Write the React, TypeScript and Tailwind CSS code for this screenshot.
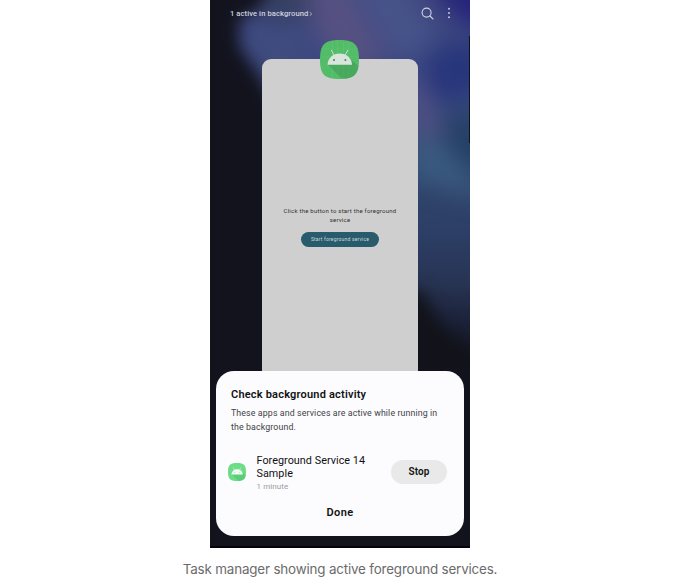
import React from "react";

function Wallpaper() {
  return (
    <svg className="absolute inset-0 h-full w-full" viewBox="0 0 260 548" preserveAspectRatio="none" aria-hidden="true">
      <defs>
        <filter id="soft" x="-100%" y="-100%" width="300%" height="300%" colorInterpolationFilters="sRGB">
          <feGaussianBlur stdDeviation="12" />
        </filter>
        <filter id="edge" x="-60%" y="-60%" width="220%" height="220%" colorInterpolationFilters="sRGB">
          <feGaussianBlur stdDeviation="8" />
        </filter>
        <linearGradient id="sky" gradientUnits="userSpaceOnUse" x1="0" y1="0" x2="0" y2="380">
          <stop offset="0" stopColor="#424a80" />
          <stop offset="0.2" stopColor="#374680" />
          <stop offset="0.4" stopColor="#334a72" />
          <stop offset="0.62" stopColor="#2c3e65" />
          <stop offset="0.75" stopColor="#273352" />
          <stop offset="0.86" stopColor="#1a2035" />
          <stop offset="0.97" stopColor="#12131d" />
        </linearGradient>
      </defs>
      <rect width="260" height="548" fill="url(#sky)" />
      <g filter="url(#soft)">
        <path d="M30 34 L85 28 L110 100 L50 100 Z" fill="#404c7e" />
        <path d="M45 -20 L92 -20 L105 14 L60 22 Z" fill="#353f60" />
        <path d="M92 -20 L130 -20 L180 60 L145 70 L112 45 Z" fill="#575182" />
        <path d="M140 -20 L185 -20 L225 40 L190 60 Z" fill="#47548a" />
        <path d="M210 -30 L290 -30 L290 38 L245 18 Z" fill="#26237a" />
        <path d="M208 75 L235 44 L285 45 L275 88 L225 102 Z" fill="#27357b" />
        <path d="M192 74 L212 72 L232 130 L206 145 Z" fill="#535285" />
        <path d="M200 138 L235 145 L280 200 L200 175 Z" fill="#3b5b80" />
        <path d="M235 118 L280 115 L280 175 L245 160 Z" fill="#243f66" />
      </g>
      <g filter="url(#edge)">
        <path d="M-30 -30 L62 -30 L53 6 L29 20 L29 46 L50 76 L70 110 L120 400 L-30 400 Z" fill="#12131d" />
        <path d="M190 289 L212 291 L232 326 L280 364 L280 410 L190 410 Z" fill="#12131a" />
      </g>
      <rect x="0" y="368" width="260" height="180" fill="#12131d" />
      <rect x="259" y="36" width="1" height="107" fill="#10131c" />
      <rect x="0" y="546" width="260" height="2" fill="#020308" />
    </svg>
  );
}

function AndroidIcon({ className, bg, head, eye, shade, grid }: { className: string; bg: string; head: string; eye: string; shade: string; grid: string }) {
  return (
    <svg className={className} viewBox="0 0 39 39" aria-hidden="true">
      <path d="M19.5 0 C34.5 0 39 4.5 39 19.5 C39 34.5 34.5 39 19.5 39 C4.5 39 0 34.5 0 19.5 C0 4.5 4.5 0 19.5 0 Z" fill={bg} />
      <path d="M12.5 1 V38 M17.5 1 V38 M23.5 1 V38 M28.5 2 V37 M2 9 H37 M1 17 H38 M1 27 H38" stroke={grid} strokeWidth="0.5" opacity="0.4" />
      <path d="M8 24.5 L32 24.5 L31.5 20 L38.3 26 C37.2 34 33.5 38 25 38.8 L20 37 Z" fill={shade} opacity="0.5" />
      <path d="M7.5 24.7 C8 18 13 13.5 19.7 13.5 C26.4 13.5 31.4 18 32 24.7 Z" fill={head} />
      <path d="M11.5 10.4 L14.3 15.5 M27.7 10.4 L25 15.5" stroke={head} strokeWidth="0.9" strokeLinecap="round" />
      <circle cx="14" cy="20" r="1" fill={eye} />
      <circle cx="25.4" cy="20" r="1" fill={eye} />
    </svg>
  );
}

function Header() {
  return (
    <header className="flex h-[27px] items-center pl-5 pr-[19px] text-[#d0d2de]">
      <span className="whitespace-nowrap font-['Roboto',sans-serif] text-[7.6px] font-medium leading-[10px] tracking-[0.08px]">1 active in background</span>
      <svg className="ml-[1px] h-1.5 w-1" viewBox="0 0 4 6" fill="none" stroke="currentColor" strokeWidth="0.7">
        <path d="M1 1.2 L2.6 3 L1 4.8" />
      </svg>
      <svg className="-mr-px -mt-px ml-auto h-[13px] w-[13px]" viewBox="0 0 13 13" fill="none" stroke="currentColor" strokeWidth="1.1" strokeLinecap="round">
        <circle cx="5.6" cy="5.6" r="4.5" />
        <path d="M9 9 L12 12" />
      </svg>
      <svg className="-mt-px ml-[14px] h-3 w-1" viewBox="0 0 4 12" fill="currentColor">
        <circle cx="2" cy="1.8" r="0.95" />
        <circle cx="2" cy="6" r="0.95" />
        <circle cx="2" cy="10.2" r="0.95" />
      </svg>
    </header>
  );
}

function AppPreview() {
  return (
    <section className="mx-auto mt-8 flex h-[312px] w-[156px] flex-col items-center rounded-t-[9px] bg-[#cfcfcf] font-['Roboto',sans-serif]">
      <AndroidIcon className="-mt-[19px] mr-px h-[39px] w-[39px] shrink-0" bg="#52bc68" head="#d8e5dd" eye="#478357" shade="#3e9654" grid="#80d48f" />
      <p className="mt-[127px] whitespace-nowrap text-center text-[6px] leading-[9px] tracking-[0.24px] text-[#303030]">
        Click the button to start the foreground
        <br />
        service
      </p>
      <button className="mt-2 h-[15px] w-[78px] shrink-0 whitespace-nowrap rounded-full bg-[#285b6c] text-[5px] leading-[15px] tracking-[0.19px] text-[#c7d8dc]">
        Start foreground service
      </button>
    </section>
  );
}

function ActivitySheet() {
  return (
    <section className="mx-auto flex h-[165px] w-[248px] flex-col rounded-[18px] bg-[#fcfcfe] pl-[15px] pr-[17px] pt-[17px] font-['Roboto',sans-serif] text-[#111113]">
      <h1 className="whitespace-nowrap text-[11px] font-semibold leading-[13px] tracking-[0.2px]">Check background activity</h1>
      <p className="mt-[5px] whitespace-nowrap text-[8.8px] leading-[14.4px] tracking-[0.12px] text-[#414145]">
        These apps and services are active while running in
        <br />
        the background.
      </p>
      <div className="mt-[19px] flex h-[38px] items-center">
        <AndroidIcon className="-ml-[3px] -mt-[2px] h-[18px] w-[18px] shrink-0" bg="#6bdc85" head="#f0faf2" eye="#83cf94" shade="#4abd68" grid="#9be8aa" />
        <div className="ml-[10.5px] mt-px whitespace-nowrap">
          <p className="text-[10.8px] leading-[12.7px] tracking-[0.04px]">
            Foreground Service 14
            <br />
            Sample
          </p>
          <p className="text-[8px] leading-[11px] tracking-[0.1px] text-[#9b9b9f]">1 minute</p>
        </div>
        <button className="-mt-[2px] ml-auto h-6 w-14 rounded-full bg-[#e9e9ea] text-[10px] font-semibold leading-6 tracking-[0.1px]">Stop</button>
      </div>
      <button className="ml-[2px] mt-[14px] self-center text-[11px] font-semibold leading-[14px] tracking-[0.4px]">Done</button>
    </section>
  );
}

export default function App() {
  return (
    <main className="flex h-[578px] w-full flex-col items-center overflow-hidden bg-white">
      <div className="relative isolate h-[548px] w-[260px] shrink-0 overflow-hidden">
        <Wallpaper />
        <div className="relative">
          <Header />
          <AppPreview />
          <ActivitySheet />
        </div>
      </div>
      <p className="mt-[12px] whitespace-nowrap font-['Inter',sans-serif] text-[13.4px] leading-[18px] tracking-[-0.17px] text-[#6b6b6b]">Task manager showing active foreground services.</p>
    </main>
  );
}
